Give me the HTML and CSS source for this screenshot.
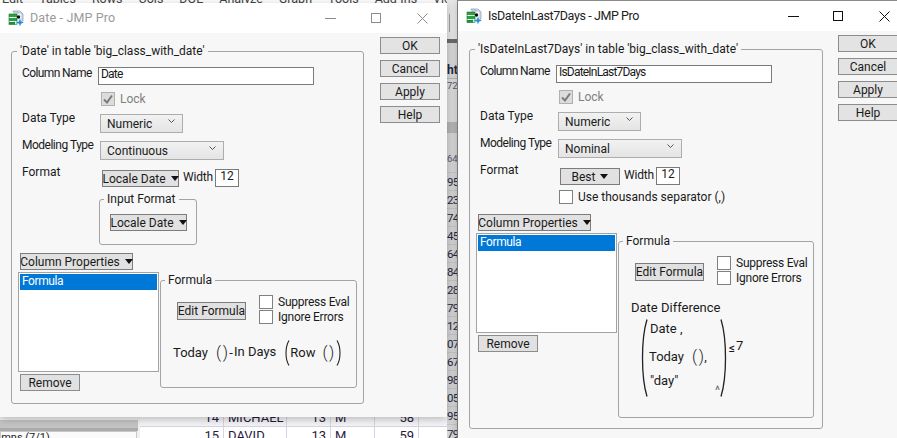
FILE: index.html
```html
<!DOCTYPE html>
<html lang="en">
<head>
<meta charset="utf-8">
<title>JMP Pro column dialogs</title>
<link rel="stylesheet" href="styles.css">
</head>
<body>
<div class="desktop">
  <svg width="0" height="0" class="defs">
    <symbol id="jmp" viewBox="0 0 17 17">
      <path d="M5 1h7l3 3v7H13V5H10V2H5z" fill="#dfe8f2" stroke="#8fa6c0" stroke-width=".8"/>
      <rect x="6" y="3" width="8" height="10" fill="#eef3f8" stroke="#9db0c6" stroke-width=".7"/>
      <rect x="1" y="4" width="8" height="3" fill="#2f9e3c"/>
      <rect x="1" y="8" width="8" height="3" fill="#25a244"/>
      <rect x="1" y="12" width="6" height="2.500" fill="#1f8f37"/>
      <rect x="1" y="4" width="8" height="10.500" fill="none" stroke="#167a2c" stroke-width=".6"/>
      <circle cx="10.500" cy="7" r="1.700" fill="#111"/>
      <path d="M12 8.500l1 3 3 1-3 1-1 3-1-3-3-1 3-1z" fill="#1f8fd6"/>
    </symbol>
  </svg>

  <div class="backdrop">
    <div class="menubar">
      <span>Edit</span><span>Tables</span><span>Rows</span><span>Cols</span><span>DOE</span><span>Analyze</span><span>Graph</span><span>Tools</span><span>Add-Ins</span><span>View</span><span>Window</span>
    </div>
    <div class="sheet-bottom">
      <div class="side-panel">
        <div class="split"></div>
        <div class="side-box">Columns (7/1)</div>
      </div>
      <div class="sheet-rows">
        <div class="sheet-row clipped"><span class="c-n">14</span><span class="c-name">MICHAEL</span><span class="c-a">13</span><span class="c-s">M</span><span class="c-h">58</span></div>
        <div class="sheet-row"><span class="c-n">15</span><span class="c-name">DAVID</span><span class="c-a">13</span><span class="c-s">M</span><span class="c-h">59</span></div>
      </div>
    </div>
    <div class="strip">
      <div class="strip-top"><span class="strip-tool"></span></div>
      <div class="strip-dark"></div>
      <div class="strip-head">ht</div>
      <div class="strip-small">72</div>
      <div class="strip-band"></div>
      <div class="strip-small low">64</div>
      <div class="cell">95</div><div class="cell">23</div><div class="cell">74</div><div class="cell">45</div><div class="cell">64</div><div class="cell">84</div><div class="cell">28</div><div class="cell">79</div><div class="cell">12</div><div class="cell">07</div><div class="cell">67</div><div class="cell">98</div><div class="cell">05</div><div class="cell">95</div><div class="cell">79</div>
    </div>
  </div>

  <section class="window win-date">
    <header class="titlebar inactive">
      <svg class="app-icon" width="17" height="17"><use href="#jmp"/></svg>
      <span class="win-title">Date - JMP Pro</span>
      <svg class="ctl ctl-min" width="11" height="11" viewBox="0 0 11 11"><path d="M0 5.500h11"/></svg>
      <svg class="ctl ctl-max" width="10" height="10" viewBox="0 0 10 10"><rect x=".5" y=".5" width="9" height="9"/></svg>
      <svg class="ctl ctl-close" width="11" height="11" viewBox="0 0 11 11"><path d="M.5.500l10 10M10.500.500l-10 10"/></svg>
    </header>
    <div class="win-body">
      <fieldset class="group main-group">
        <legend>'Date' in table 'big_class_with_date'</legend>
        <div class="row"><span class="lbl lbl-name">Column Name</span><span class="field name-field">Date</span></div>
        <div class="row lock-row"><span class="check checked"><svg width="12" height="12" viewBox="0 0 12 12"><path d="M2 6.500l3 3 5-7"/></svg></span><span class="muted">Lock</span></div>
        <div class="row type-row"><span class="lbl lbl-up">Data Type</span><span class="combo combo-s">Numeric<svg width="7" height="5" viewBox="0 0 7 5"><path d="M.5.500l3 3 3-3"/></svg></span></div>
        <div class="row type-row2"><span class="lbl lbl-up lbl-tight">Modeling Type</span><span class="combo combo-l">Continuous<svg width="7" height="5" viewBox="0 0 7 5"><path d="M.5.500l3 3 3-3"/></svg></span></div>
        <div class="row format-row"><span class="lbl lbl-up2">Format</span><span class="btn menu-btn fmt-btn">Locale Date<i class="tri"></i></span><span class="width-lbl">Width</span><span class="field width-field">12</span></div>
        <fieldset class="group input-format">
          <legend>Input Format</legend>
          <span class="btn menu-btn fmt-btn">Locale Date<i class="tri"></i></span>
        </fieldset>
        <span class="btn menu-btn props-btn">Column Properties<i class="tri"></i></span>
        <div class="props">
          <div class="props-left">
            <div class="listbox"><div class="list-sel">Formula</div></div>
            <span class="btn remove-btn">Remove</span>
          </div>
          <fieldset class="group formula-group">
            <legend>Formula</legend>
            <div class="formula-tools">
              <span class="btn edit-btn">Edit Formula</span>
              <div class="checks">
                <div class="check-line"><span class="check"></span>Suppress Eval</div>
                <div class="check-line"><span class="check"></span>Ignore Errors</div>
              </div>
            </div>
            <div class="expr expr-one">
              <span>Today</span><span class="small-parens">()</span><span class="minus">-</span><span class="in-days">In Days</span>
              <svg class="paren" width="6" height="26" viewBox="0 0 6 26"><path d="M5 .5C1 7 1 19 5 25.500"/></svg>
              <span>Row</span><span class="small-parens row-parens">()</span>
              <svg class="paren" width="6" height="26" viewBox="0 0 6 26"><path d="M1 .5C5 7 5 19 1 25.500"/></svg>
            </div>
          </fieldset>
        </div>
      </fieldset>
      <div class="actions">
        <span class="btn action">OK</span><span class="btn action">Cancel</span><span class="btn action">Apply</span><span class="btn action">Help</span>
      </div>
    </div>
  </section>

  <section class="window win-last7">
    <header class="titlebar">
      <svg class="app-icon" width="17" height="17"><use href="#jmp"/></svg>
      <span class="win-title">IsDateInLast7Days - JMP Pro</span>
      <svg class="ctl ctl-min" width="11" height="11" viewBox="0 0 11 11"><path d="M0 5.500h11"/></svg>
      <svg class="ctl ctl-max" width="10" height="10" viewBox="0 0 10 10"><rect x=".5" y=".5" width="9" height="9"/></svg>
      <svg class="ctl ctl-close" width="11" height="11" viewBox="0 0 11 11"><path d="M.5.500l10 10M10.500.500l-10 10"/></svg>
    </header>
    <div class="win-body">
      <fieldset class="group main-group">
        <legend>'IsDateInLast7Days' in table 'big_class_with_date'</legend>
        <div class="row"><span class="lbl lbl-name">Column Name</span><span class="field name-field">IsDateInLast7Days</span></div>
        <div class="row lock-row"><span class="check checked"><svg width="12" height="12" viewBox="0 0 12 12"><path d="M2 6.500l3 3 5-7"/></svg></span><span class="muted">Lock</span></div>
        <div class="row type-row"><span class="lbl lbl-up">Data Type</span><span class="combo combo-s">Numeric<svg width="7" height="5" viewBox="0 0 7 5"><path d="M.5.500l3 3 3-3"/></svg></span></div>
        <div class="row type-row2"><span class="lbl lbl-up lbl-tight">Modeling Type</span><span class="combo combo-l">Nominal<svg width="7" height="5" viewBox="0 0 7 5"><path d="M.5.500l3 3 3-3"/></svg></span></div>
        <div class="row format-row"><span class="lbl lbl-up2">Format</span><span class="btn menu-btn best-btn">Best<i class="tri"></i></span><span class="width-lbl">Width</span><span class="field width-field">12</span></div>
        <div class="row sep-row"><span class="check"></span><span>Use thousands separator (,)</span></div>
        <span class="btn menu-btn props-btn props-near">Column Properties<i class="tri"></i></span>
        <div class="props">
          <div class="props-left">
            <div class="listbox"><div class="list-sel">Formula</div></div>
            <span class="btn remove-btn">Remove</span>
          </div>
          <fieldset class="group formula-group tall">
            <legend>Formula</legend>
            <div class="formula-tools">
              <span class="btn edit-btn">Edit Formula</span>
              <div class="checks">
                <div class="check-line"><span class="check"></span>Suppress Eval</div>
                <div class="check-line"><span class="check"></span>Ignore Errors</div>
              </div>
            </div>
            <div class="expr-two">
              <div class="fn-name">Date Difference</div>
              <div class="fn-call">
                <svg class="paren-big" width="8" height="78" viewBox="0 0 8 78"><path d="M7 .5C1 20 1 58 7 77.500"/></svg>
                <div class="args">
                  <div class="arg">Date ,</div>
                  <div class="arg arg-today"><span>Today</span><span class="small-parens">()</span><span class="comma">,</span></div>
                  <div class="arg arg-last"><span>"day"</span><span class="caret">^</span></div>
                </div>
                <svg class="paren-big" width="8" height="78" viewBox="0 0 8 78"><path d="M1 .5C7 20 7 58 1 77.500"/></svg>
                <span class="leq">≤</span><span class="seven">7</span>
              </div>
            </div>
          </fieldset>
        </div>
      </fieldset>
      <div class="actions">
        <span class="btn action">OK</span><span class="btn action">Cancel</span><span class="btn action">Apply</span><span class="btn action">Help</span>
      </div>
    </div>
  </section>
</div>
</body>
</html>
```

FILE: styles.css
```css
* { box-sizing: border-box; }
html, body { margin: 0; padding: 0; }
body {
  width: 897px;
  height: 438px;
  overflow: hidden;
  font-family: Roboto, "Noto Sans", sans-serif;
  font-size: 12px;
  line-height: 14px;
  color: #1a1a1a;
  background: #fff;
}
.desktop { position: relative; width: 897px; height: 438px; overflow: hidden; }
.defs { position: absolute; }

/* Data table showing behind the dialogs */
.backdrop { position: absolute; inset: 0; background: #fff; }
.menubar {
  display: flex;
  gap: 16px;
  height: 4px;
  padding-left: 2px;
  overflow: hidden;
  font-size: 12.500px;
  line-height: 4px;
  color: #444;
  white-space: nowrap;
}
.menubar span { display: block; margin-top: -3px; }
.sheet-bottom {
  position: absolute;
  left: 0; top: 417px;
  width: 447px;
  height: 21px;
  display: flex;
}
.side-panel { width: 140px; background: #f0f0f0; }
.split { height: 11px; margin-top: 3px; background: #c4c4c4; border-bottom: 3px solid #ababab; margin-right: 2px; }
.side-box {
  height: 12px;
  margin-right: 3px;
  border: 1px solid #c8c8c8;
  border-bottom: 0;
  background: #fafafa;
  line-height: 12px;
  font-size: 11px;
  text-indent: -22px;
  overflow: hidden;
  white-space: nowrap;
}
.sheet-rows { flex: 1; background: #fff; }
.sheet-row {
  display: flex;
  height: 18px;
  line-height: 17px;
  font-size: 13px;
  color: #2a1a40;
  border-bottom: 1px solid #d6d4e2;
}
.sheet-row.clipped { height: 10px; line-height: 2px; overflow: hidden; background: #f4f4f6; }
.sheet-row span { border-right: 1px solid #d6d4e2; padding: 0 4px; overflow: hidden; }
.c-n { width: 84px; text-align: right; }
.c-name { width: 63px; }
.c-a { width: 44px; text-align: right; }
.c-s { width: 44px; }
.c-h { width: 44px; text-align: right; }

.strip {
  position: absolute;
  left: 447px; top: 0;
  width: 11px;
  height: 438px;
  overflow: hidden;
  background: #d4d4d4;
  color: #1f2a44;
  border-right: 1px solid #8a8a8a;
}
.strip-top { height: 39px; background: #e8e8e8; overflow: hidden; }
.strip-tool { display: block; width: 1px; height: 18px; margin: 14px 0 0 2px; background: #a0a0a8; }
.strip-dark { height: 4px; background: #6c6c6c; }
.strip-head { height: 36px; padding-top: 20px; line-height: 14px; font-weight: 700; font-size: 12px; background: #d8d8d8; border-bottom: 1px solid #b8b8b8; }
.strip-small { height: 43px; font-size: 9.500px; color: #5a5a70; background: #dcdcdc; }
.strip-band { height: 11px; background: #b6b6b6; }
.strip-small.low { height: 40px; padding-top: 19px; background: #d6d6d6; border-bottom: 1px solid #c4c4cc; }
.cell { height: 18px; font-size: 11.500px; letter-spacing: -.6px; line-height: 18px; border-bottom: 1px solid #c4c4cc; white-space: nowrap; }

/* Windows */
.window {
  position: absolute;
  background: #f7f7f7;
  box-shadow: 0 2px 8px rgba(0, 0, 0, .25);
}
.win-date { left: 0; top: 3px; width: 447px; height: 414px; }
.win-last7 { left: 458px; top: 0; width: 460px; height: 438px; border-top: 1px solid #8a8a8a; }

.titlebar {
  display: flex;
  align-items: center;
  height: 30px;
  background: #fff;
  font-size: 12.500px;
  color: #222;
}
.titlebar.inactive { color: #9a9a9a; }
.app-icon { margin-left: 8px; flex: none; }
.win-title { margin-left: 5px; flex: 1; letter-spacing: .15px; }
.win-last7 .win-title { letter-spacing: -.4px; }
.ctl { flex: none; fill: none; stroke: #111; stroke-width: 1; }
.inactive .ctl { stroke: #8c8c8c; }
.ctl-min { margin-right: 35px; }
.ctl-max { margin-right: 36px; }
.ctl-close { margin-right: 19px; }
.win-last7 .ctl-min { margin-right: 34px; }
.win-last7 .ctl-max { margin-right: 36px; }
.win-last7 .ctl-close { margin-right: 28px; }

.win-body { display: flex; align-items: flex-start; padding: 11px 0 0 11px; }

.group {
  margin: 0;
  padding: 0;
  min-width: 0;
  border: 1px solid #a3a3a3;
  border-radius: 3px;
}
.group > legend { padding: 0 3px; line-height: 14px; white-space: nowrap; }
.main-group { width: 353px; padding: 9px 0 12px 10px; }
.main-group > legend { margin-left: -5px; }
.win-last7 .main-group { width: 354px; padding-bottom: 10px; }

.actions { display: flex; flex-direction: column; gap: 6px; margin: -7px 0 0 16px; }
.win-last7 .actions { margin-left: 15px; }

.btn {
  display: flex;
  align-items: center;
  justify-content: center;
  height: 17px;
  background: #e1e1e1;
  border: 1px solid #7c7c7c;
  white-space: nowrap;
}
.action { width: 60px; border-color: #8c8c8c; background: #e3e3e3; }
.tri {
  display: inline-block;
  width: 0; height: 0;
  margin-left: 5px;
  border: 4px solid transparent;
  border-top: 5px solid #111;
  border-bottom: 0;
}

.row { display: flex; align-items: flex-start; }
.lbl { width: 76px; flex: none; white-space: nowrap; }
.lbl-name { margin-top: -1px; letter-spacing: -.6px; }
.lbl-tight { letter-spacing: -.5px; }
.lbl-up { margin-top: -3px; }
.lbl-up2 { margin-top: -5px; }
.field {
  display: block;
  background: #fff;
  border: 1px solid #7a7a7a;
  height: 18px;
  line-height: 13px;
  padding-left: 2px;
}
.name-field { width: 216px; letter-spacing: -.8px; }
.lock-row { margin-top: 7px; padding-left: 79px; }
.muted { color: #808080; margin-left: 5px; }
.check {
  display: block;
  flex: none;
  width: 14px;
  height: 14px;
  background: #fff;
  border: 1px solid #808080;
}
.check svg { display: block; fill: none; stroke: #7a7a7a; stroke-width: 2; }
.check.checked { background: #dcdcdc; border-color: #b0b0b0; }
.type-row { margin-top: 8px; }
.type-row2 { margin-top: 8px; }
.combo {
  display: flex;
  align-items: center;
  justify-content: space-between;
  height: 19px;
  margin-left: 2px;
  padding: 0 7px 0 6px;
  background: linear-gradient(#f2f2f2, #e4e4e4);
  border: 1px solid #adadad;
}
.combo svg { fill: none; stroke: #555; stroke-width: 1; margin-top: -4px; }
.combo-s { width: 83px; }
.combo-l { width: 124px; }
.format-row { margin-top: 10px; }
.menu-btn { flex: none; }
.fmt-btn { width: 77px; margin-left: 4px; }
.best-btn { width: 60px; margin-left: 4px; }
.width-lbl { width: 28px; margin-left: 4px; letter-spacing: -.2px; }
.width-field { width: 24px; margin: -1px 0 0 4px; padding: 0; text-align: center; line-height: 12px; }
.input-format { width: 98px; margin: 5px 0 0 77px; height: 53px; padding: 8px 0 0 6px; }
.input-format > legend { margin-left: -2px; }
.props-btn { width: 113px; margin: 8px 0 0 -2px; }
.props-near { margin-top: 10px; }
.sep-row { margin-top: 5px; padding-left: 79px; }
.sep-row > span:last-child { margin-left: 5px; }
.props { display: flex; align-items: flex-start; margin: 2px 0 0 -4px; }
.props-left { flex: none; width: 142px; }
.listbox {
  width: 141px;
  height: 100px;
  padding: 1px;
  background: #fff;
  border: 1px solid #a3a3a3;
}
.list-sel { height: 16px; line-height: 14px; padding-left: 2px; background: #0078d7; color: #fff; letter-spacing: -.4px; }
.remove-btn { width: 60px; margin: 2px 0 0 2px; border-color: #8c8c8c; }

.formula-group { width: 197px; height: 115px; margin-top: 1px; padding: 0 0 0 16px; }
.formula-group > legend { margin-left: -12px; }
.formula-group.tall { height: 184px; width: 196px; }
.formula-tools { display: flex; align-items: flex-start; margin-top: 7px; }
.edit-btn { width: 69px; height: 18px; margin-top: 8px; flex: none; }
.checks { margin: 0 0 0 13px; }
.check-line { display: flex; align-items: center; height: 15px; white-space: nowrap; letter-spacing: -.25px; }
.check-line .check { margin-right: 5px; }

.expr { display: flex; align-items: center; margin: 16px 0 0 -4px; font-size: 13px; white-space: nowrap; }
.small-parens { font-size: 16px; font-weight: 300; margin-left: 8px; letter-spacing: 1.500px; }
.minus { margin: 0 1px 0 0; }
.in-days { margin-top: -3px; margin-right: 8px; }
.paren { flex: none; fill: none; stroke: #222; stroke-width: 1.100; }
.row-parens { margin-left: 7px; }

.expr-two { margin: 15px 0 0 -4px; font-size: 13px; white-space: nowrap; }
.fn-name { line-height: 16px; }
.fn-call { display: flex; align-items: flex-start; margin: 3px 0 0 9px; }
.paren-big { flex: none; fill: none; stroke: #222; stroke-width: 1.300; }
.args { width: 72px; padding-left: 2px; }
.arg { height: 27px; line-height: 20px; }
.arg-today { display: flex; align-items: center; height: 28px; margin: -3px 0 0 -1px; }
.arg-last { display: flex; justify-content: space-between; align-items: flex-start; height: 26px; }
.comma { margin-left: -1px; }
.caret { font-size: 12px; margin-top: 10px; color: #666; }
.leq { margin: 22px 0 0 1px; font-size: 12px; line-height: 14px; }
.seven { margin: 20px 0 0 1px; }
```
